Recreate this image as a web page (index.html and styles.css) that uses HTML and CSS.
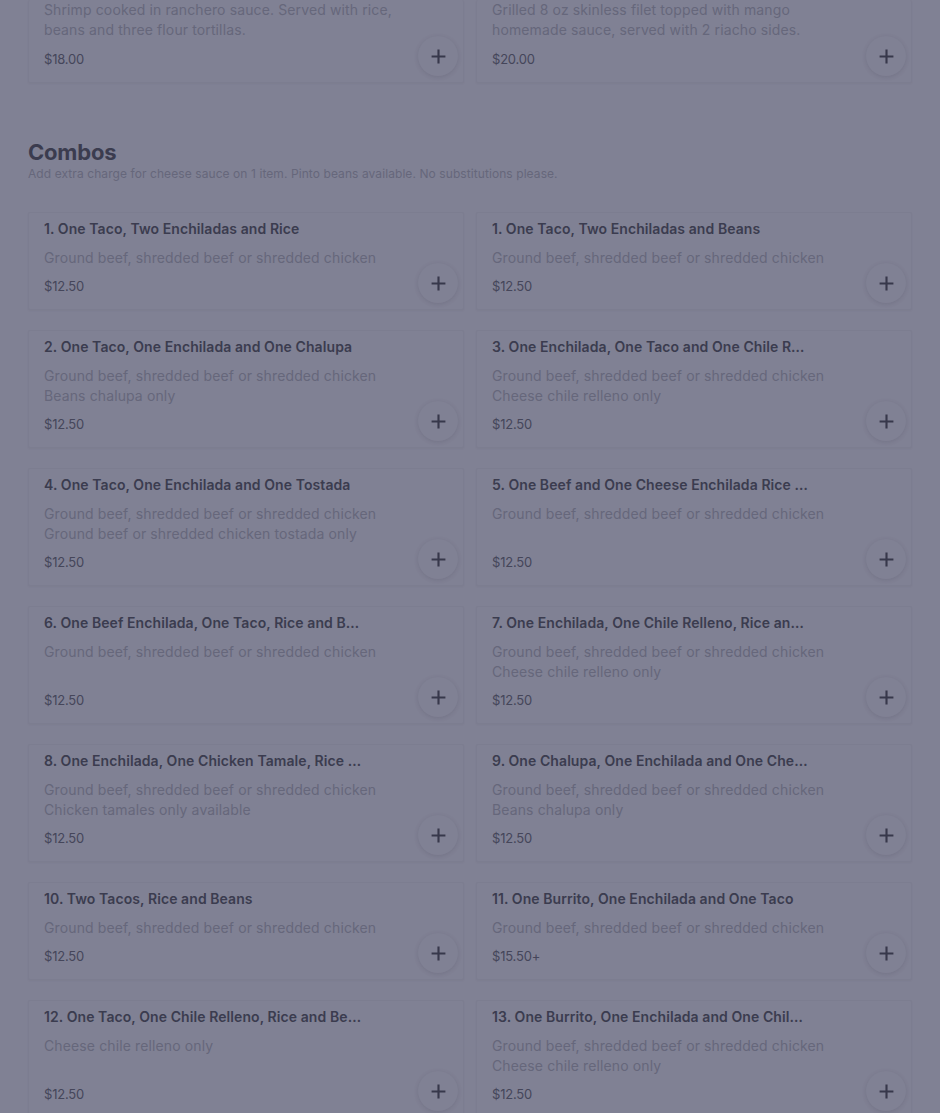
FILE: index.html
```html
<!DOCTYPE html>
<html lang="en">
<head>
<meta charset="utf-8">
<title>Menu - Combos</title>
<link rel="stylesheet" href="styles.css">
</head>
<body>
<main class="page">
  <section class="grid grid--top">
    <article class="card card--cut">
      <div class="info">
        <p class="desc">Shrimp cooked in ranchero sauce. Served with rice, beans and three flour tortillas.</p>
        <p class="price">$18.00</p>
      </div>
      <button class="add" aria-label="Add"><svg viewBox="0 0 16 16"><path d="M8 1.5v13M1.5 8h13"/></svg></button>
    </article>
    <article class="card card--cut">
      <div class="info">
        <p class="desc">Grilled 8 oz skinless filet topped with mango homemade sauce, served with 2 riacho sides.</p>
        <p class="price">$20.00</p>
      </div>
      <button class="add" aria-label="Add"><svg viewBox="0 0 16 16"><path d="M8 1.5v13M1.5 8h13"/></svg></button>
    </article>
  </section>

  <header class="section-head">
    <h2 class="section-title">Combos</h2>
    <p class="section-sub">Add extra charge for cheese sauce on 1 item. Pinto beans available. No substitutions please.</p>
  </header>

  <section class="grid">
    <article class="card">
      <div class="info">
        <h3 class="title">1. One Taco, Two Enchiladas and Rice</h3>
        <p class="desc">Ground beef, shredded beef or shredded chicken</p>
        <p class="price">$12.50</p>
      </div>
      <button class="add" aria-label="Add"><svg viewBox="0 0 16 16"><path d="M8 1.5v13M1.5 8h13"/></svg></button>
    </article>
    <article class="card">
      <div class="info">
        <h3 class="title">1. One Taco, Two Enchiladas and Beans</h3>
        <p class="desc">Ground beef, shredded beef or shredded chicken</p>
        <p class="price">$12.50</p>
      </div>
      <button class="add" aria-label="Add"><svg viewBox="0 0 16 16"><path d="M8 1.5v13M1.5 8h13"/></svg></button>
    </article>

    <article class="card">
      <div class="info">
        <h3 class="title">2. One Taco, One Enchilada and One Chalupa</h3>
        <p class="desc">Ground beef, shredded beef or shredded chicken<br>Beans chalupa only</p>
        <p class="price">$12.50</p>
      </div>
      <button class="add" aria-label="Add"><svg viewBox="0 0 16 16"><path d="M8 1.5v13M1.5 8h13"/></svg></button>
    </article>
    <article class="card">
      <div class="info">
        <h3 class="title">3. One Enchilada, One Taco and One Chile Relleno</h3>
        <p class="desc">Ground beef, shredded beef or shredded chicken<br>Cheese chile relleno only</p>
        <p class="price">$12.50</p>
      </div>
      <button class="add" aria-label="Add"><svg viewBox="0 0 16 16"><path d="M8 1.5v13M1.5 8h13"/></svg></button>
    </article>

    <article class="card">
      <div class="info">
        <h3 class="title">4. One Taco, One Enchilada and One Tostada</h3>
        <p class="desc">Ground beef, shredded beef or shredded chicken<br>Ground beef or shredded chicken tostada only</p>
        <p class="price">$12.50</p>
      </div>
      <button class="add" aria-label="Add"><svg viewBox="0 0 16 16"><path d="M8 1.5v13M1.5 8h13"/></svg></button>
    </article>
    <article class="card">
      <div class="info">
        <h3 class="title">5. One Beef and One Cheese Enchilada Rice and Beans</h3>
        <p class="desc">Ground beef, shredded beef or shredded chicken</p>
        <p class="price">$12.50</p>
      </div>
      <button class="add" aria-label="Add"><svg viewBox="0 0 16 16"><path d="M8 1.5v13M1.5 8h13"/></svg></button>
    </article>

    <article class="card">
      <div class="info">
        <h3 class="title">6. One Beef Enchilada, One Taco, Rice and Beans</h3>
        <p class="desc">Ground beef, shredded beef or shredded chicken</p>
        <p class="price">$12.50</p>
      </div>
      <button class="add" aria-label="Add"><svg viewBox="0 0 16 16"><path d="M8 1.5v13M1.5 8h13"/></svg></button>
    </article>
    <article class="card">
      <div class="info">
        <h3 class="title">7. One Enchilada, One Chile Relleno, Rice and Beans</h3>
        <p class="desc">Ground beef, shredded beef or shredded chicken<br>Cheese chile relleno only</p>
        <p class="price">$12.50</p>
      </div>
      <button class="add" aria-label="Add"><svg viewBox="0 0 16 16"><path d="M8 1.5v13M1.5 8h13"/></svg></button>
    </article>

    <article class="card">
      <div class="info">
        <h3 class="title">8. One Enchilada, One Chicken Tamale, Rice and Beans</h3>
        <p class="desc">Ground beef, shredded beef or shredded chicken<br>Chicken tamales only available</p>
        <p class="price">$12.50</p>
      </div>
      <button class="add" aria-label="Add"><svg viewBox="0 0 16 16"><path d="M8 1.5v13M1.5 8h13"/></svg></button>
    </article>
    <article class="card">
      <div class="info">
        <h3 class="title">9. One Chalupa, One Enchilada and One Cheese Taco</h3>
        <p class="desc">Ground beef, shredded beef or shredded chicken<br>Beans chalupa only</p>
        <p class="price">$12.50</p>
      </div>
      <button class="add" aria-label="Add"><svg viewBox="0 0 16 16"><path d="M8 1.5v13M1.5 8h13"/></svg></button>
    </article>

    <article class="card">
      <div class="info">
        <h3 class="title">10. Two Tacos, Rice and Beans</h3>
        <p class="desc">Ground beef, shredded beef or shredded chicken</p>
        <p class="price">$12.50</p>
      </div>
      <button class="add" aria-label="Add"><svg viewBox="0 0 16 16"><path d="M8 1.5v13M1.5 8h13"/></svg></button>
    </article>
    <article class="card">
      <div class="info">
        <h3 class="title">11. One Burrito, One Enchilada and One Taco</h3>
        <p class="desc">Ground beef, shredded beef or shredded chicken</p>
        <p class="price">$15.50+</p>
      </div>
      <button class="add" aria-label="Add"><svg viewBox="0 0 16 16"><path d="M8 1.5v13M1.5 8h13"/></svg></button>
    </article>

    <article class="card">
      <div class="info">
        <h3 class="title">12. One Taco, One Chile Relleno, Rice and Beans</h3>
        <p class="desc">Cheese chile relleno only</p>
        <p class="price">$12.50</p>
      </div>
      <button class="add" aria-label="Add"><svg viewBox="0 0 16 16"><path d="M8 1.5v13M1.5 8h13"/></svg></button>
    </article>
    <article class="card">
      <div class="info">
        <h3 class="title">13. One Burrito, One Enchilada and One Chile Relleno</h3>
        <p class="desc">Ground beef, shredded beef or shredded chicken<br>Cheese chile relleno only</p>
        <p class="price">$12.50</p>
      </div>
      <button class="add" aria-label="Add"><svg viewBox="0 0 16 16"><path d="M8 1.5v13M1.5 8h13"/></svg></button>
    </article>
  </section>
</main>
</body>
</html>
```

FILE: styles.css
```css
* { box-sizing: border-box; }

html, body {
  margin: 0;
  padding: 0;
  background: #808194;
}

body {
  font-family: Inter, "Noto Sans", "Liberation Sans", sans-serif;
  color: #3c3d50;
  -webkit-font-smoothing: antialiased;
}

.page {
  padding: 0 28px 40px;
}

.grid {
  display: grid;
  grid-template-columns: 1fr 1fr;
  column-gap: 12px;
  row-gap: 20px;
}

.card {
  display: flex;
  min-height: 98px;
  border: 1px solid #7c7d90;
  border-radius: 2px;
  box-shadow: 0 1px 2px rgba(60, 60, 80, 0.05);
}

.card--cut {
  border-top: none;
  min-height: 0;
}

.info {
  flex: 1;
  min-width: 0;
  display: flex;
  flex-direction: column;
  padding: 6px 0 13px 15px;
}

.card--cut .info {
  padding-top: 0;
  padding-bottom: 13px;
}

.card--cut .desc {
  margin-bottom: 9px;
}

.title {
  margin: 0 0 9px;
  max-width: 318px;
  font-size: 14px;
  line-height: 20px;
  font-weight: 600;
  color: #3b3c4f;
  white-space: nowrap;
  overflow: hidden;
  text-overflow: ellipsis;
  letter-spacing: 0.08px;
}

.desc {
  margin: 0 0 8px;
  max-width: 358px;
  font-size: 14px;
  line-height: 20px;
  color: #66677b;
  letter-spacing: 0.12px;
}

.price {
  margin: auto 0 0;
  font-size: 13px;
  line-height: 20px;
  color: #45465a;
  letter-spacing: -0.2px;
}

.add {
  flex: none;
  align-self: flex-end;
  width: 40px;
  height: 40px;
  margin: 0 5px 6px 0;
  padding: 0;
  border: none;
  border-radius: 50%;
  background: #808194;
  box-shadow: 0 1px 4px rgba(50, 50, 70, 0.16);
  display: flex;
  align-items: center;
  justify-content: center;
  cursor: pointer;
}

.add svg {
  width: 17px;
  height: 17px;
  fill: none;
  stroke: #37384b;
  stroke-width: 2;
}

.section-head {
  margin: 55px 0 30px;
}

.section-title {
  margin: 0;
  font-size: 22px;
  line-height: 28px;
  font-weight: 700;
  color: #3b3c4f;
  letter-spacing: -0.2px;
}

.section-sub {
  margin: 0;
  font-size: 12px;
  line-height: 16px;
  color: #66677b;
  letter-spacing: 0.08px;
}
```
